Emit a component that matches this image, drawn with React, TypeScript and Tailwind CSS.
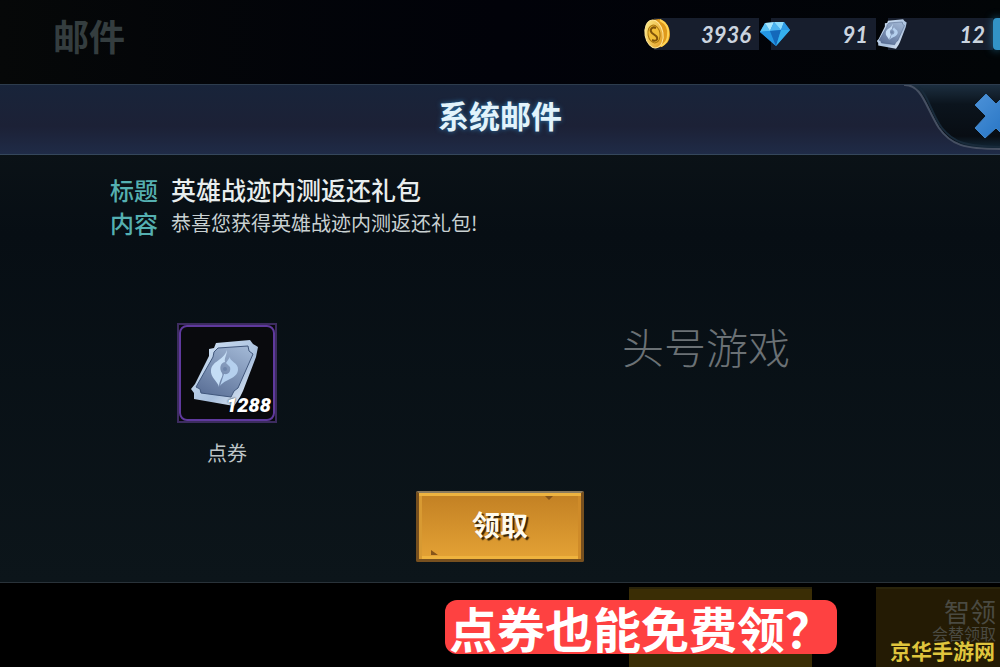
const balances = [
  { name: "金币", value: "3936", icon: <CoinIcon /> },
  { name: "钻石", value: "91", icon: <GemIcon /> },
  { name: "点券", value: "12", icon: <TicketIcon className="h-8 w-8" /> },
];

const fields = [
  {
    label: "标题",
    text: "英雄战迹内测返还礼包",
    style: "text-[25px] font-medium text-[#e9eeee]",
  },
  {
    label: "内容",
    text: "恭喜您获得英雄战迹内测返还礼包!",
    style: "text-[20px] text-[#c9d1d2]",
  },
];

function CoinIcon() {
  return (
    <svg viewBox="0 0 32 32" className="h-8 w-8" aria-hidden="true">
      <defs>
        <linearGradient id="coin" x1="0" y1="0" x2="1" y2="1">
          <stop offset="0" stopColor="#fff08e" />
          <stop offset="1" stopColor="#e0951a" />
        </linearGradient>
      </defs>
      <path d="M10 2 L17 1 C23 2 28 9 28 16 C28 23 24 27 19 29 L13 30Z" fill="#e09a1c" />
      <path d="M18 2 C24 5 27 10 26 17 C26 22 23 26 19 28" fill="none" stroke="#ffd455" strokeWidth="2" />
      <ellipse cx="12" cy="16" rx="9" ry="14" transform="rotate(-10 12 16)" fill="url(#coin)" stroke="#ffe79a" />
      <ellipse cx="12" cy="16" rx="6" ry="9" transform="rotate(-10 12 16)" fill="#f1bd38" stroke="#a8740f" />
      <path d="M14 10 C10 8 7 12 10 15 L14 18 C17 21 14 24 10 22" fill="none" stroke="#80530a" strokeWidth="2" />
    </svg>
  );
}

function GemIcon() {
  return (
    <svg viewBox="0 0 32 32" className="h-8 w-8" aria-hidden="true">
      <path d="M1 14 L6 5 L25 4 L31 12 L17 28Z" fill="#1d83d6" />
      <path d="M1 14 L6 5 L11 13Z" fill="#59c2f5" />
      <path d="M6 5 L15 4 L11 13Z" fill="#a8e8ff" />
      <path d="M15 4 L22 12 L11 13Z" fill="#4cb4f0" />
      <path d="M15 4 L25 4 L22 12Z" fill="#8bdcfd" />
      <path d="M25 4 L31 12 L22 12Z" fill="#2c9be5" />
      <path d="M1 14 L11 13 L17 28Z" fill="#2496e2" />
      <path d="M11 13 L22 12 L17 28Z" fill="#1468ba" />
      <path d="M22 12 L31 12 L17 28Z" fill="#35b0ec" />
    </svg>
  );
}

function TicketIcon({ className }: { className: string }) {
  return (
    <svg viewBox="0 0 72 72" className={className} aria-hidden="true">
      <defs>
        <linearGradient id="ticket-edge" x1="0" y1="0" x2="1" y2="1">
          <stop offset="0" stopColor="#d8e9fa" />
          <stop offset="0.6" stopColor="#a9c0dd" />
          <stop offset="1" stopColor="#f3f8ff" />
        </linearGradient>
        <linearGradient id="ticket-face" x1="0.8" y1="0" x2="0.2" y2="1">
          <stop offset="0" stopColor="#9fb5d3" />
          <stop offset="1" stopColor="#5b7097" />
        </linearGradient>
      </defs>
      <path
        d="M27 6 L61 3 L64 7 L69 10 L67 20 L54 54 L51 60 L45 69 L5 62 L5 56 L2 52 L6 47 L20 19 L20 12 L25 11Z"
        fill="url(#ticket-edge)"
      />
      <path
        d="M29 11 L59 9 L60 14 L64 17 L49 51 L45 54 L42 60 L12 56 L11 52 L7 50 L24 20 L25 15Z"
        fill="url(#ticket-face)"
        stroke="#41577c"
      />
      <path d="M38 13 C38 18 35 21 36 25 C31 26 30 32 33 36 C35 39 30 43 30 50 C29 45 21 40 22 33 C23 24 34 24 38 13Z" fill="#c5ddf5" />
      <path d="M41 20 C40 24 50 26 49 33 C48 42 36 42 31 49 L35 37 C40 38 42 34 41 30 L37 26Z" fill="#b5d0ee" />
      <circle cx="36" cy="32" r="2" fill="#6d85aa" />
    </svg>
  );
}

function CloseCorner() {
  return (
    <svg viewBox="0 0 96 70" className="h-full w-full" aria-hidden="true">
      <defs>
        <linearGradient id="corner" x1="0" y1="0" x2="0" y2="1">
          <stop offset="0" stopColor="#1c2e3f" />
          <stop offset="0.3" stopColor="#0b141d" />
          <stop offset="0.8" stopColor="#080d13" />
          <stop offset="1" stopColor="#132a3b" />
        </linearGradient>
        <linearGradient id="close" x1="0" y1="0" x2="1" y2="1">
          <stop offset="0" stopColor="#4d92d8" />
          <stop offset="1" stopColor="#1f6fc0" />
        </linearGradient>
      </defs>
      <path d="M2 0 C20 2 24 24 36 43 C48 59 60 63 96 64 L96 0Z" fill="url(#corner)" />
      <path d="M0 0 C18 -1 22 23 35 43 C47 60 60 64 96 64" fill="none" stroke="#465062" strokeWidth="2" />
      <path d="M15 2 C24 10 28 30 38 43 C50 58 62 61 96 62" fill="none" stroke="#182a3a" strokeWidth="2" />
      <path
        d="M82 9 L92 19 L102 9 L112 20 L102 31 L112 43 L102 53 L92 43 L81 53 L71 43 L82 31 L71 20Z"
        fill="url(#close)"
        stroke="#3f84c8"
      />
    </svg>
  );
}

export default function App() {
  return (
    <div className="flex min-h-screen flex-col overflow-hidden bg-black font-['Noto_Sans_CJK_SC',sans-serif]">
      <header className="flex h-[84px] items-start justify-between bg-linear-to-r from-[#060808] via-[#010209] to-[#020507] pl-[53px]">
        <h1 className="pt-[14px] text-[36px] leading-[42px] font-bold text-[#343d3f]">邮件</h1>
        <ul className="flex pt-[18px] font-[Lato,sans-serif]">
          {balances.map((balance) => (
            <li key={balance.name} className="flex h-8 w-[117px] items-center justify-between">
              <span className="z-10 shrink-0" title={balance.name}>{balance.icon}</span>
              <span className="-ml-5 flex h-8 flex-1 items-center justify-end bg-[#171e2d] pr-2 text-[22px] font-bold text-[#cbd4df] italic">
                {balance.value}
              </span>
            </li>
          ))}
          <li className="flex">
            <button aria-label="增加" className="h-8 w-[7px] rounded-l-sm bg-[#3293c7] shadow-[0_0_8px_#206b91]" />
          </li>
        </ul>
      </header>

      <main className="flex flex-1 flex-col border-b border-[#293239] bg-linear-to-b from-[#0e1519] via-[#070e14] via-30% to-[#0c151a]">
        <div className="relative flex h-[71px] items-center justify-center border-y border-t-[#2d3c4d] border-b-[#35475c] bg-linear-to-b from-[#18243a] via-[#1c2136] via-60% to-[#1f2b47]">
          <h2 className="pb-2 text-[31px] font-bold text-[#e2f3fb] [text-shadow:0_0_5px_#2d77ae]">系统邮件</h2>
          <button aria-label="关闭" className="absolute top-0 right-0 h-[70px] w-24">
            <CloseCorner />
          </button>
        </div>

        <dl className="grid grid-cols-[49px_1fr] gap-x-3 pt-4 pl-[110px]">
          {fields.map((field) => (
            <div key={field.label} className="col-span-2 grid h-[34px] grid-cols-subgrid items-center">
              <dt className="text-[24px] font-medium text-[#55b0b1]">{field.label}</dt>
              <dd className={field.style}>{field.text}</dd>
            </div>
          ))}
        </dl>

        <div className="flex items-start pt-[84px]">
          <figure className="ml-[177px] flex w-[100px] flex-col items-center">
            <div className="relative flex h-[100px] w-full items-center justify-center border-2 border-[#3d2c60] bg-[#090a0d] pr-1">
              <div className="absolute inset-0 rounded-lg border-2 border-[#5f399d]" />
              <TicketIcon className="h-[72px] w-[72px]" />
              <span className="absolute right-1 bottom-1 font-[Roboto,sans-serif] text-[20px] leading-6 font-black text-white italic [text-shadow:0_0_2px_#000]">
                1288
              </span>
            </div>
            <figcaption className="pt-4 text-[20px] leading-7 text-[#bdc5c7]">点券</figcaption>
          </figure>
          <p className="ml-[345px] text-[42px] leading-[46px] font-light text-[#6b7175]">头号游戏</p>
        </div>

        <div className="mt-auto flex justify-center pb-5">
          <button className="relative h-[71px] w-[168px] rounded-xs border-3 border-t-2 border-[#77501f] border-t-[#8b7b5e] bg-linear-to-b from-[#c28023] to-[#e4a235] pb-1 text-[28px] font-bold text-[#fffbed] shadow-[inset_0_3px_0_#eeb33f,inset_3px_0_0_#d89a32,inset_-3px_0_0_#cf8b29,inset_0_-3px_0_#efb33e] [text-shadow:2px_2px_1px_#3a2505]">
            <svg viewBox="0 0 162 66" className="absolute inset-0 h-full w-full" aria-hidden="true">
              <path d="M126 3 L134 3 L130 7Z M12 62 L12 57 L19 62Z" fill="#87551a" />
            </svg>
            领取
          </button>
        </div>
      </main>

      <footer className="relative flex h-[84px] items-end justify-end overflow-hidden pt-1">
        <div className="mr-16 h-full w-[183px] border-t-2 border-[#2a240b] bg-[#3a2d05]" />
        <div className="h-full w-[124px] border-t-2 border-[#2a240b] bg-[#241b04] pt-2 pr-1 text-right text-[#4a4a42]">
          <p className="text-[26px] leading-7">智领</p>
          <p className="text-[16px] leading-4">会替领取</p>
        </div>
        <p className="absolute right-[163px] bottom-[13px] rounded-xl bg-[#fe4141] pr-1 pl-1 text-[48px] leading-[54px] font-bold whitespace-nowrap text-white">
          点券也能免费领？
        </p>
        <p className="absolute right-[5px] bottom-[3px] text-[21px] leading-7 font-bold text-[#dfc53d]">京华手游网</p>
      </footer>
    </div>
  );
}
